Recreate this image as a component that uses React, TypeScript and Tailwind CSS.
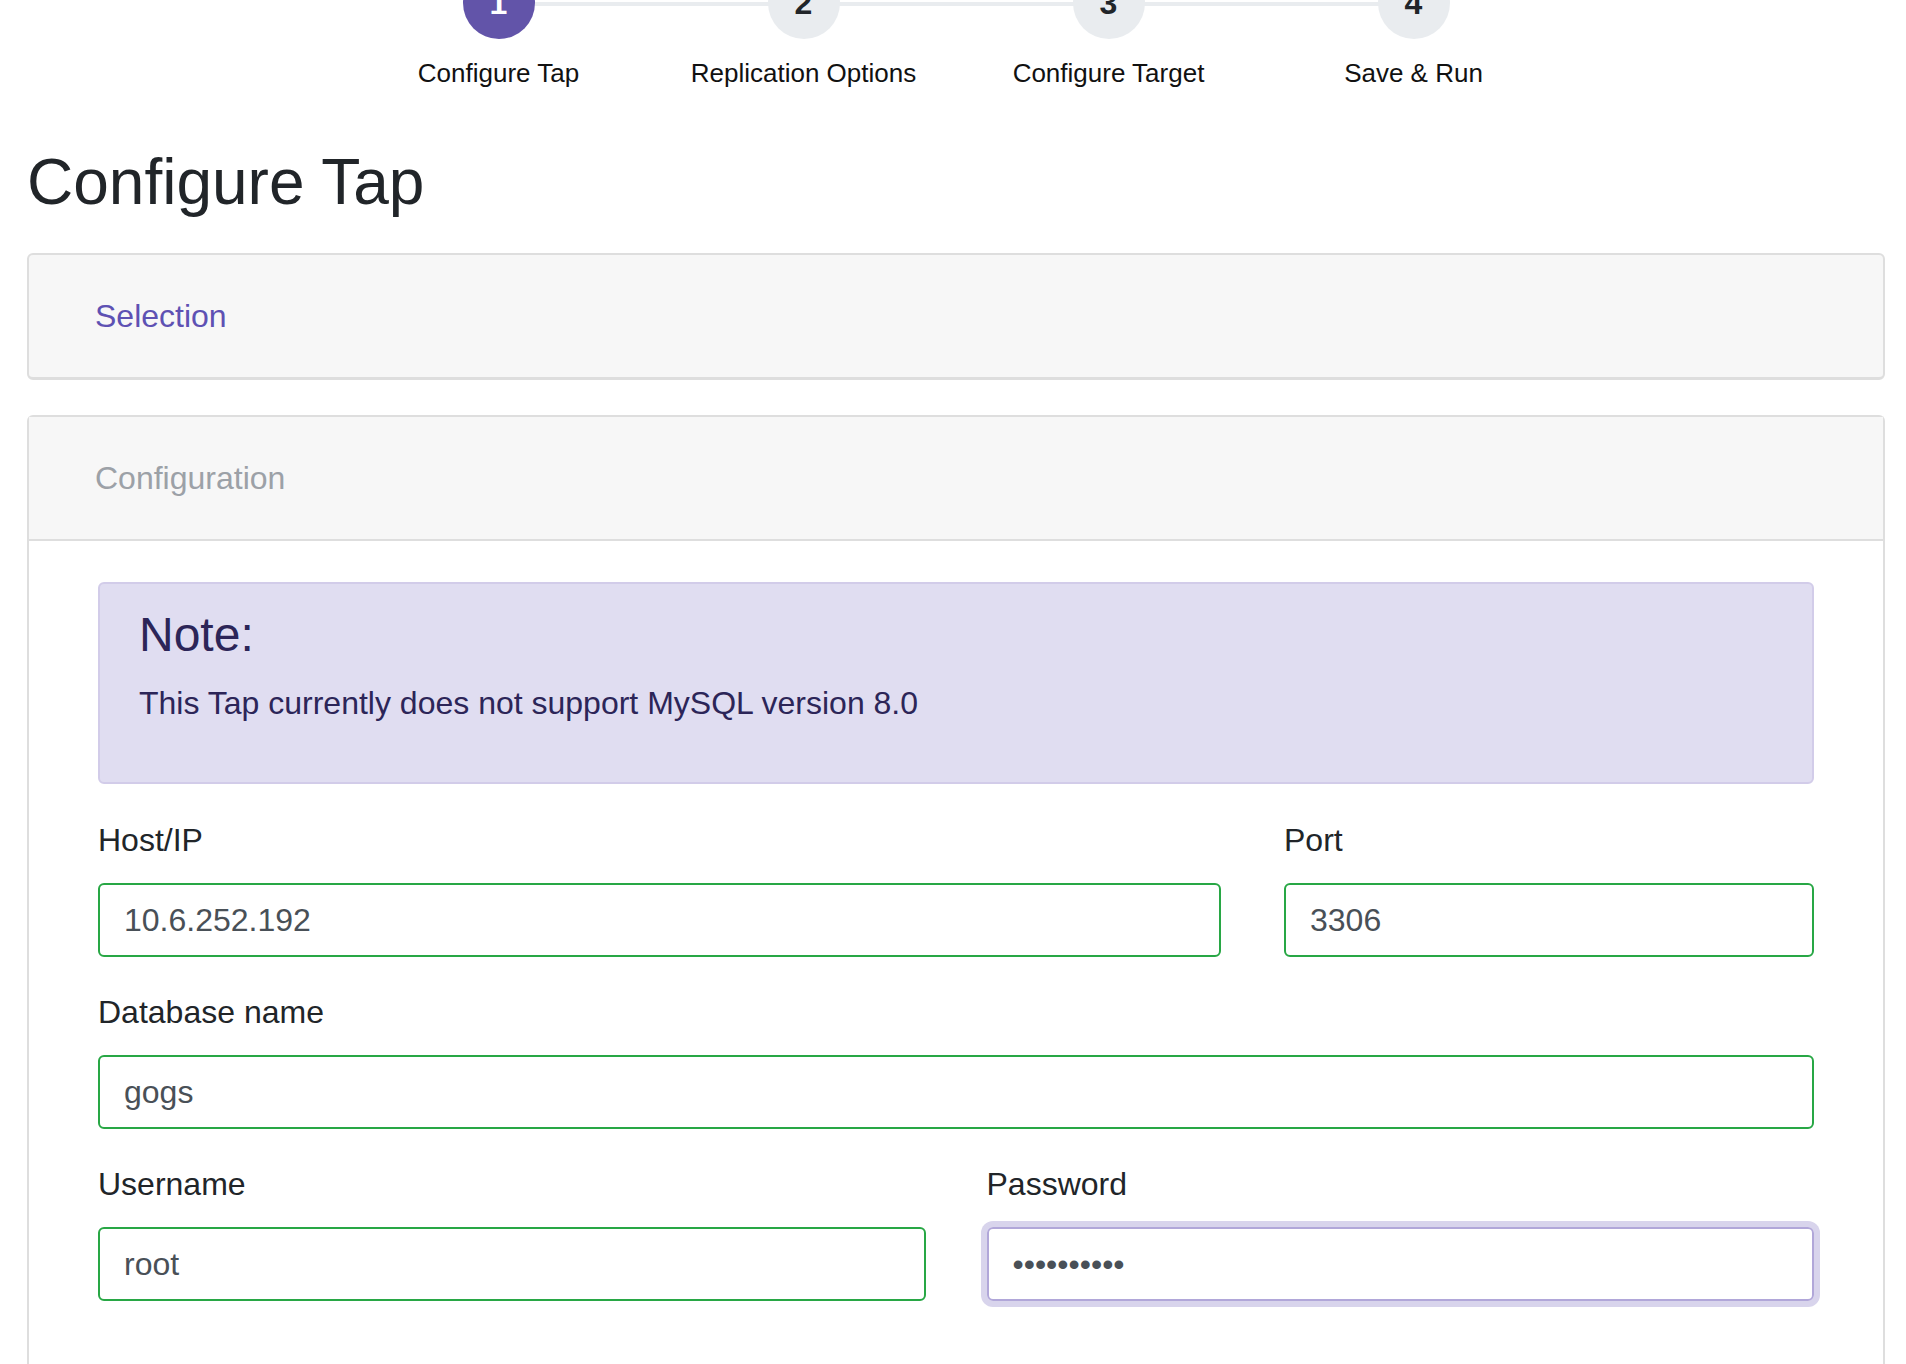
import { useState } from "react";

const steps = ["Configure Tap", "Replication Options", "Configure Target", "Save & Run"];

interface FieldProps {
  label: string;
  value: string;
  type?: string;
  focused?: boolean;
  className?: string;
}

function Field({ label, value, type = "text", focused = false, className = "" }: FieldProps) {
  const [val, setVal] = useState(value);
  return (
    <div className={`flex flex-col ${className}`}>
      <label className="text-[32px] leading-[46px] text-[#212529] mb-[20px]">{label}</label>
      <input
        type={type}
        value={val}
        autoFocus={focused}
        onChange={(e) => setVal(e.target.value)}
        className={
          focused
            ? "h-[74px] w-full rounded-[6px] border-2 border-[#b1a7d9] px-[24px] text-[32px] text-[#495057] caret-[#495057] outline-none shadow-[0_0_0_6px_#d8d4ec]"
            : "h-[74px] w-full rounded-[6px] border-2 border-[#28a745] px-[24px] text-[32px] text-[#495057] outline-none"
        }
      />
    </div>
  );
}

export default function App() {
  return (
    <div
      className="min-h-[1364px] overflow-hidden bg-white pl-[27px] pr-[21px]"
      style={{ fontFamily: '"Liberation Sans", Arial, sans-serif' }}
    >
      {/* wizard steps */}
      <div className="relative mx-auto mt-[-33px] flex w-[1220px]">
        <div className="absolute left-[152px] right-[152px] top-[35px] h-[4px] bg-[#e9ecef]"></div>
        {steps.map((s, i) => (
          <div key={s} className="relative flex w-[305px] flex-col items-center">
            <div
              className={
                i === 0
                  ? "flex h-[72px] w-[72px] items-center justify-center rounded-full bg-[#6254a9] text-[32px] font-bold text-white"
                  : "flex h-[72px] w-[72px] items-center justify-center rounded-full bg-[#e9ecef] text-[32px] font-bold text-[#212529]"
              }
            >
              {i + 1}
            </div>
            <div className="mt-[19px] text-[26px] leading-[30px] text-[#111]">{s}</div>
          </div>
        ))}
      </div>

      <h1 className="mt-[57px] text-[64px] leading-[74px] text-[#212529]">Configure Tap</h1>

      {/* selection panel */}
      <div className="mt-[34px] flex h-[127px] items-center rounded-[6px] border-2 border-b-[3px] border-[#dedede] bg-[#f7f7f7] pl-[66px]">
        <span className="text-[32px] text-[#5e51b3]">Selection</span>
      </div>

      {/* configuration panel */}
      <div className="mt-[35px] rounded-t-[6px] border-2 border-b-0 border-[#dedede]">
        <div className="flex h-[124px] items-center border-b-2 border-[#dedede] bg-[#f7f7f7] pl-[66px]">
          <span className="text-[32px] text-[#9ca1a7]">Configuration</span>
        </div>

        <div className="px-[69px] pt-[41px] pb-[120px]">
          <div className="rounded-[6px] border-2 border-[#d2cce9] bg-[#e0ddf1] pl-[39px] pr-[37px] pt-[23px] pb-[56px] text-[#2c2558]">
            <h4 className="text-[48px] leading-[56px]">Note:</h4>
            <p className="mt-[17px] text-[32px] leading-[46px]">
              This Tap currently does not support MySQL version 8.0
            </p>
          </div>

          <div className="mt-[33px] grid grid-cols-3 gap-x-[63px]">
            <Field label="Host/IP" value="10.6.252.192" className="col-span-2" />
            <Field label="Port" value="3306" />
          </div>

          <Field label="Database name" value="gogs" className="mt-[32px]" />

          <div className="mt-[32px] grid grid-cols-2 gap-x-[61px]">
            <Field label="Username" value="root" />
            <Field label="Password" value="xxxxxxxxxx" type="password" focused />
          </div>
        </div>
      </div>
    </div>
  );
}
